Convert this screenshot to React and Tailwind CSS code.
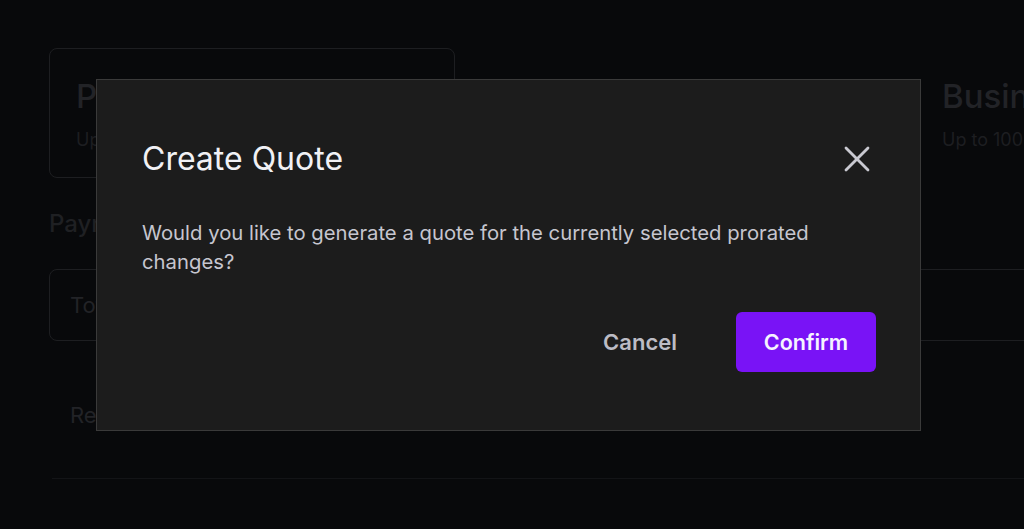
import { X } from 'lucide-react'

const PLANS = [
  { name: 'Pro', sub: 'Up to 10 users' },
  { name: 'Team', sub: 'Up to 25 users' },
  { name: 'Business', sub: 'Up to 100 users' },
]

function Backdrop() {
  return (
    <div className="pl-[49px] pt-[48px]">
      {/* Plan cards */}
      <div className="flex gap-[27px]">
        {PLANS.map((p, i) => (
          <div
            key={p.name}
            className={`w-[406px] h-[130px] shrink-0 rounded-lg px-[26px] pt-[27px] border ${
              i === 0 ? 'border-[#1d1e21]' : 'border-transparent'
            }`}
          >
            <div className="text-[33px] leading-[41px] font-medium text-[#222327] whitespace-nowrap">{p.name}</div>
            <div className="mt-[11px] text-[18px] leading-[24px] text-[#1d1e21] whitespace-nowrap">{p.sub}</div>
          </div>
        ))}
      </div>

      {/* Payment section */}
      <div className="mt-[31px] text-[24px] leading-[30px] font-medium text-[#1f2023]">Payment Schedule</div>
      <div className="mt-[30px] w-[1100px] h-[72px] rounded-lg border border-[#1d1e21] flex items-center px-[20px]">
        <span className="text-[22px] text-[#222327]">Total due today</span>
      </div>
      <div className="mt-[60px] pl-[21px] text-[22px] leading-[28px] text-[#222327]">Remaining balance</div>
      <div className="mt-[49px] ml-[3px] border-t border-[#131417] h-[60px]" />
    </div>
  )
}

export default function App() {
  return (
    <div
      className="relative w-full h-[529px] overflow-hidden bg-[#08090b]"
      style={{ fontFamily: 'Inter, "Noto Sans", sans-serif' }}
    >
      <Backdrop />

      {/* Modal */}
      <div className="absolute left-[96px] top-[79px] w-[825px] h-[352px] bg-[#1c1c1c] border border-[#3a3a3a] pl-[45px] pr-[44px] pt-[62px]">
        <div className="flex items-center justify-between h-[34px]">
          <h2 className="text-[32px] leading-[34px] font-normal text-[#f1f1f5]">Create Quote</h2>
          <button className="text-[#c9c9d1] -mr-[3px]">
            <X size={44} strokeWidth={1.5} />
          </button>
        </div>
        <p className="mt-[42px] text-[20.3px] leading-[29px] text-[#c6c6cf]">
          Would you like to generate a quote for the currently selected prorated changes?
        </p>
        <div className="mt-[36px] flex justify-end items-center gap-[31px]">
          <button className="h-[60px] px-[28px] text-[22px] font-semibold text-[#bcbcc5]">Cancel</button>
          <button className="h-[60px] w-[140px] rounded-md bg-[#7913f6] text-[21.5px] font-semibold text-[#f5f3ff]">
            Confirm
          </button>
        </div>
      </div>
    </div>
  )
}
